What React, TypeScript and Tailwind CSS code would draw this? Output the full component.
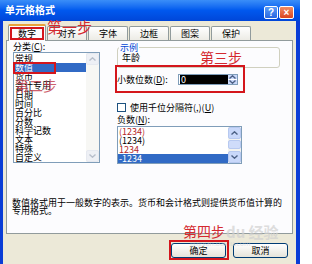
import React from 'react';

const categories = ['常规', '数值', '货币', '会计专用', '日期', '时间', '百分比', '分数', '科学记数', '文本', '特殊', '自定义'];
const tabs = ['对齐', '字体', '边框', '图案', '保护'];

const Chevron = ({ up, color = '#4d6185' }: { up?: boolean; color?: string }) => (
  <svg width="7" height="4" viewBox="0 0 7 4">
    <path d={up ? 'M0.5 3.5 L3.5 0.8 L6.5 3.5' : 'M0.5 0.5 L3.5 3.2 L6.5 0.5'} stroke={color} strokeWidth="1.4" fill="none" />
  </svg>
);

const ScrollBtn = ({ up, pale }: { up?: boolean; pale?: boolean }) => (
  <div
    className={`h-[12px] w-full flex items-center justify-center rounded-[2px] border ${
      pale ? 'border-[#e6e9f0] bg-[#eef0f5]' : 'border-[#b7c9f0] bg-[#c9d8fa]'
    }`}
  >
    <Chevron up={up} color={pale ? '#b8bfcc' : '#4d6185'} />
  </div>
);

const App = () => {
  return (
    <div className="relative w-[312px] h-[264px] overflow-hidden bg-white font-['Noto_Sans_CJK_SC',sans-serif] text-[9px] leading-[9px] text-black">
      <div className="w-[300px] h-[264px] flex flex-col">
        {/* Title bar */}
        <div className="h-[21px] flex items-center justify-between bg-linear-to-b from-[#3a8ef8] via-[#0058ee] to-[#0046d8] pl-[5px] pr-[6px]">
          <span className="text-white font-bold text-[10px] leading-[10px] mt-[-1px]">单元格格式</span>
          <div className="flex gap-[1px] mt-[4px]">
            <div className="w-[14px] h-[13px] rounded-[2px] border border-white bg-linear-to-b from-[#5a9cf8] to-[#2a66e0] text-white font-bold text-[10px] leading-[11px] text-center font-['Liberation_Sans',sans-serif]">
              ?
            </div>
            <div className="w-[15px] h-[13px] rounded-[2px] border border-white bg-linear-to-b from-[#f08a60] to-[#d9431e] text-white font-bold text-[10px] leading-[11px] text-center font-['Liberation_Sans',sans-serif]">
              ×
            </div>
          </div>
        </div>

        {/* Body */}
        <div className="flex-1 bg-[#ece9d8] border-l-[3px] border-r-[4px] border-[#0a3dd6] pt-[3px]">
          {/* Tabs */}
          <div className="flex items-end gap-[1px] ml-[5px] h-[17px] relative z-10">
            <div className="w-[38px] h-[17px] border border-b-0 border-[#919b9c] border-t-[#e8a23a] border-t-2 rounded-t-[2px] bg-[#fcfcfe] flex items-center justify-center">
              数字
            </div>
            {tabs.map((t) => (
              <div
                key={t}
                className="w-[40px] h-[14px] mb-[1px] border border-b-0 border-[#919b9c] rounded-t-[2px] bg-linear-to-b from-white to-[#ecebe5] flex items-center justify-center"
              >
                {t}
              </div>
            ))}
          </div>

          {/* Panel */}
          <div className="ml-[3px] -mt-[1px] w-[287px] h-[194px] border border-[#919b9c] bg-[#fcfcfe]">
            <div className="flex pl-[6px]">
              {/* Left column */}
              <div className="w-[87px]">
                <div className="h-[11px] pt-[1px] leading-[10px]">
                  分类(<span className="underline">C</span>):
                </div>
                <div className="h-[111px] border border-[#7f9db9] bg-white flex">
                  <div className="flex-1 pt-[1px]">
                    {categories.map((c) => (
                      <div
                        key={c}
                        className={`h-[9px] leading-[9px] pl-[1px] ${c === '数值' ? 'bg-[#316ac5] text-white' : ''}`}
                      >
                        {c}
                      </div>
                    ))}
                  </div>
                  <div className="w-[13px] bg-[#f7f7f4] flex flex-col justify-between">
                    <ScrollBtn up pale />
                    <ScrollBtn pale />
                  </div>
                </div>
              </div>

              {/* Right column */}
              <div className="ml-[17px] w-[163px]">
                <div className="relative mt-[6px] h-[21px] border border-[#d0d0bf] rounded-[3px] pl-[4px] pt-[5px]">
                  <span className="absolute -top-[5px] left-[1px] bg-[#fcfcfe] px-[1px] text-[#0046d5]">示例</span>
                  年龄
                </div>

                <div className="mt-[5px] h-[12px] flex items-center">
                  <span className="w-[61px]">
                    小数位数(<span className="underline">D</span>):
                  </span>
                  <div className="w-[60px] h-[11px] border border-[#7f9db9] bg-white flex items-stretch">
                    <div className="flex-1 bg-black text-white leading-[9px] pl-[1px] ml-[1px]">0</div>
                    <div className="w-[9px] flex flex-col bg-[#c9d8fa]">
                      <div className="flex-1 flex items-center justify-center border-b border-white">
                        <Chevron up />
                      </div>
                      <div className="flex-1 flex items-center justify-center">
                        <Chevron />
                      </div>
                    </div>
                  </div>
                </div>

                <div className="mt-[18px] h-[9px] flex items-center gap-[4px]">
                  <div className="w-[9px] h-[9px] border border-[#1c5180] bg-white" />
                  <span>
                    使用千位分隔符(,)(<span className="underline">U</span>)
                  </span>
                </div>

                <div className="mt-[3px] h-[9px]">
                  负数(<span className="underline">N</span>):
                </div>

                <div className="mt-[2px] w-[125px] h-[38px] border border-[#7f9db9] bg-white flex">
                  <div className="flex-1">
                    <div className="h-[9px] pl-[1px] text-[#b42828]">(1234)</div>
                    <div className="h-[9px] pl-[1px]">(1234)</div>
                    <div className="h-[9px] pl-[1px] text-[#b42828]">1234</div>
                    <div className="h-[9px] pl-[1px] bg-[#316ac5] text-white">-1234</div>
                  </div>
                  <div className="w-[13px] bg-[#f3f3ef] flex flex-col">
                    <ScrollBtn up />
                    <div className="mt-[1px] h-[9px] rounded-[2px] border border-[#b7c9f0] bg-[#cfdcfa]" />
                    <div className="flex-1" />
                    <ScrollBtn />
                  </div>
                </div>
              </div>
            </div>

            <p className="mt-[35px] ml-[5px] w-[272px] leading-[8px]">
              数值格式用于一般数字的表示。货币和会计格式则提供货币值计算的专用格式。
            </p>
          </div>

          {/* Buttons */}
          <div className="mt-[9px] flex justify-end gap-[7px] pr-[8px]">
            <button className="w-[55px] h-[15px] rounded-[3px] border border-[#003c74] bg-linear-to-b from-white to-[#e6e4da] leading-[9px]">
              确定
            </button>
            <button className="w-[55px] h-[15px] rounded-[3px] border border-[#003c74] bg-linear-to-b from-white to-[#e6e4da] leading-[9px]">
              取消
            </button>
          </div>
        </div>
      </div>

      {/* Annotations */}
      <div className="absolute z-20 left-[10px] top-[27px] w-[34px] h-[13px] border-2 border-[#d4161c]" />
      <span className="absolute z-20 left-[47px] top-[19px] text-[15px] leading-[15px] text-[#d42a30]">第一步</span>

      <div className="absolute z-20 left-[13px] top-[62px] w-[43px] h-[12px] border-2 border-[#d4161c]" />
      <span className="absolute z-20 left-[15px] top-[78px] text-[14px] leading-[14px] text-[#c43b4a] opacity-80">第二步</span>

      <span className="absolute z-20 left-[200px] top-[50px] text-[14px] leading-[14px] text-[#d42a30]">第三步</span>
      <div className="absolute z-20 left-[115px] top-[65px] w-[130px] h-[28px] border-2 border-[#d4161c]" />

      <span className="absolute z-20 left-[226px] top-[224px] text-[15px] leading-[15px] font-bold text-[#d0d0d0] opacity-70">du 经验</span>
      <span className="absolute z-20 left-[183px] top-[224px] text-[14px] leading-[14px] text-[#d42a30]">第四步</span>
      <span className="absolute z-20 left-[190px] top-[240px] text-[7px] leading-[7px] text-[#cfcfcf] opacity-60">jingyan.baidu.com</span>
      <div className="absolute z-20 left-[169px] top-[240px] w-[60px] h-[20px] border-2 border-[#d4161c]" />
    </div>
  );
};

export default App;
